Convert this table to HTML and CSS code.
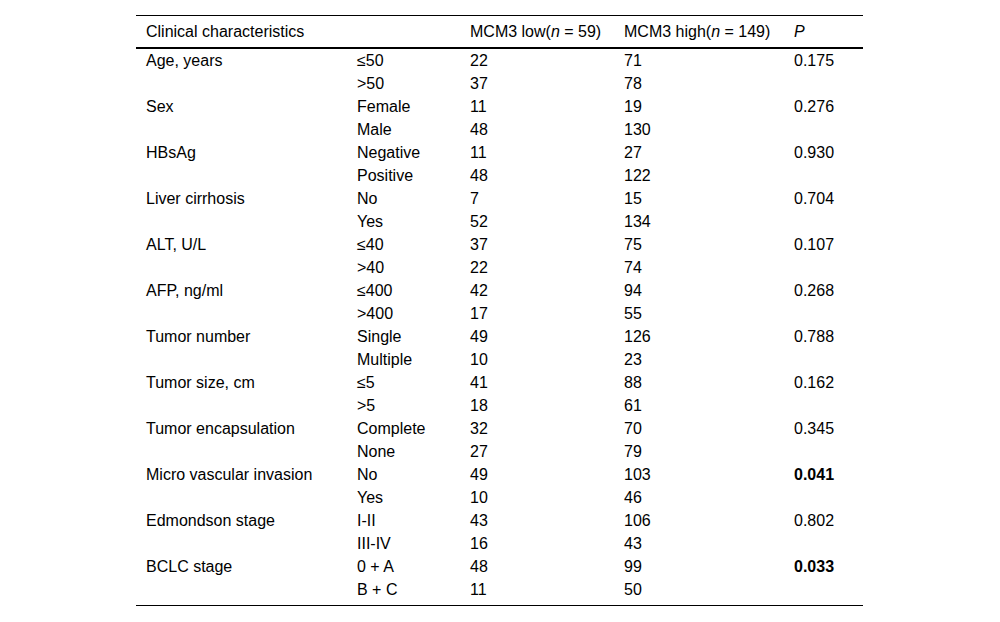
FILE: index.html
```html
<!DOCTYPE html>
<html>
<head>
<meta charset="utf-8">
<link rel="stylesheet" href="styles.css">
</head>
<body>
<table class="tbl">
<colgroup><col class="c1"><col class="c2"><col class="c3"><col class="c4"><col class="c5"></colgroup>
<thead>
<tr><th>Clinical characteristics</th><th></th><th>MCM3 low(<i>n</i> = 59)</th><th>MCM3 high(<i>n</i> = 149)</th><th><i>P</i></th></tr>
</thead>
<tbody>
<tr><td>Age, years</td><td>≤50</td><td>22</td><td>71</td><td>0.175</td></tr>
<tr><td></td><td>&gt;50</td><td>37</td><td>78</td><td></td></tr>
<tr><td>Sex</td><td>Female</td><td>11</td><td>19</td><td>0.276</td></tr>
<tr><td></td><td>Male</td><td>48</td><td>130</td><td></td></tr>
<tr><td>HBsAg</td><td>Negative</td><td>11</td><td>27</td><td>0.930</td></tr>
<tr><td></td><td>Positive</td><td>48</td><td>122</td><td></td></tr>
<tr><td>Liver cirrhosis</td><td>No</td><td>7</td><td>15</td><td>0.704</td></tr>
<tr><td></td><td>Yes</td><td>52</td><td>134</td><td></td></tr>
<tr><td>ALT, U/L</td><td>≤40</td><td>37</td><td>75</td><td>0.107</td></tr>
<tr><td></td><td>&gt;40</td><td>22</td><td>74</td><td></td></tr>
<tr><td>AFP, ng/ml</td><td>≤400</td><td>42</td><td>94</td><td>0.268</td></tr>
<tr><td></td><td>&gt;400</td><td>17</td><td>55</td><td></td></tr>
<tr><td>Tumor number</td><td>Single</td><td>49</td><td>126</td><td>0.788</td></tr>
<tr><td></td><td>Multiple</td><td>10</td><td>23</td><td></td></tr>
<tr><td>Tumor size, cm</td><td>≤5</td><td>41</td><td>88</td><td>0.162</td></tr>
<tr><td></td><td>&gt;5</td><td>18</td><td>61</td><td></td></tr>
<tr><td>Tumor encapsulation</td><td>Complete</td><td>32</td><td>70</td><td>0.345</td></tr>
<tr><td></td><td>None</td><td>27</td><td>79</td><td></td></tr>
<tr><td>Micro vascular invasion</td><td>No</td><td>49</td><td>103</td><td class="b">0.041</td></tr>
<tr><td></td><td>Yes</td><td>10</td><td>46</td><td></td></tr>
<tr><td>Edmondson stage</td><td>I-II</td><td>43</td><td>106</td><td>0.802</td></tr>
<tr><td></td><td>III-IV</td><td>16</td><td>43</td><td></td></tr>
<tr><td>BCLC stage</td><td>0 + A</td><td>48</td><td>99</td><td class="b">0.033</td></tr>
<tr class="last"><td></td><td>B + C</td><td>11</td><td>50</td><td></td></tr>
</tbody>
</table>
</body>
</html>
```
FILE: styles.css
```css
html, body {
  margin: 0;
  padding: 0;
  background: #fff;
}
body {
  font-family: "Liberation Sans", Arial, sans-serif;
  font-size: 16px;
  color: #000;
}
.tbl {
  margin: 15px 0 0 136px;
  width: 727px;
  border-collapse: collapse;
  table-layout: fixed;
  border-top: 1px solid #000;
  border-bottom: 1px solid #000;
}
.c1 { width: 211px; }
.c2 { width: 113px; }
.c3 { width: 154px; }
.c4 { width: 170px; }
.c5 { width: 79px; }
.tbl th {
  font-weight: normal;
  text-align: left;
  padding: 4px 10px;
  line-height: 23px;
  border-bottom: 2px solid #000;
  white-space: nowrap;
}
.tbl td {
  padding: 0 10px;
  line-height: 23px;
  height: 23px;
  white-space: nowrap;
}
.tbl tr.last td {
  padding-bottom: 4px;
}
.b {
  font-weight: bold;
}
```
